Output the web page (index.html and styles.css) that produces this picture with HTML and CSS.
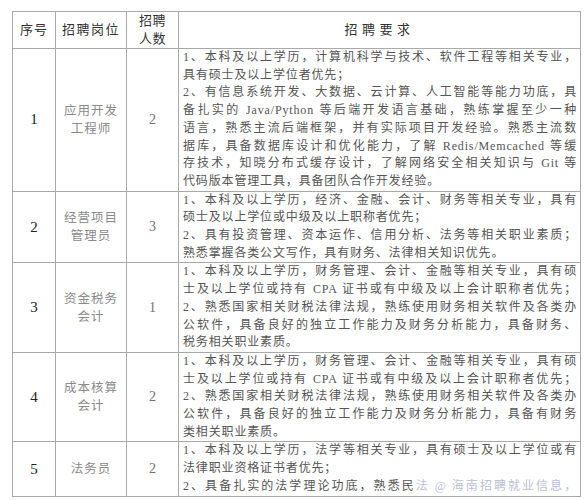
FILE: index.html
```html
<!DOCTYPE html>
<html lang="zh-CN">
<head>
<meta charset="utf-8">
<title>招聘岗位</title>
<link rel="stylesheet" href="styles.css">
</head>
<body>
<table class="jobs">
  <colgroup>
    <col class="c1"><col class="c2"><col class="c3"><col class="c4">
  </colgroup>
  <thead>
    <tr>
      <th class="h-no">序号</th>
      <th class="h-post">招聘岗位</th>
      <th class="h-cnt">招聘<br>人数</th>
      <th class="h-req">招聘要求</th>
    </tr>
  </thead>
  <tbody>
    <tr>
      <td class="no">1</td>
      <td class="post">应用开发<br>工程师</td>
      <td class="cnt">2</td>
      <td class="req">
        <span class="ln j">1、本科及以上学历，计算机科学与技术、软件工程等相关专业，</span>
        <span class="ln">具有硕士及以上学位者优先；</span>
        <span class="ln j">2、有信息系统开发、大数据、云计算、人工智能等能力功底，具</span>
        <span class="ln j">备扎实的 Java/Python 等后端开发语言基础，熟练掌握至少一种</span>
        <span class="ln j">语言，熟悉主流后端框架，并有实际项目开发经验。熟悉主流数</span>
        <span class="ln j">据库，具备数据库设计和优化能力，了解 Redis/Memcached 等缓</span>
        <span class="ln j">存技术，知晓分布式缓存设计，了解网络安全相关知识与 Git 等</span>
        <span class="ln">代码版本管理工具，具备团队合作开发经验。</span>
      </td>
    </tr>
    <tr>
      <td class="no">2</td>
      <td class="post">经营项目<br>管理员</td>
      <td class="cnt">3</td>
      <td class="req">
        <span class="ln j">1、本科及以上学历，经济、金融、会计、财务等相关专业，具有</span>
        <span class="ln">硕士及以上学位或中级及以上职称者优先；</span>
        <span class="ln j">2、具有投资管理、资本运作、信用分析、法务等相关职业素质；</span>
        <span class="ln">熟悉掌握各类公文写作，具有财务、法律相关知识优先。</span>
      </td>
    </tr>
    <tr>
      <td class="no">3</td>
      <td class="post">资金税务<br>会计</td>
      <td class="cnt">1</td>
      <td class="req">
        <span class="ln j">1、本科及以上学历，财务管理、会计、金融等相关专业，具有硕</span>
        <span class="ln j">士及以上学位或持有 CPA 证书或有中级及以上会计职称者优先；</span>
        <span class="ln j">2、熟悉国家相关财税法律法规，熟练使用财务相关软件及各类办</span>
        <span class="ln j">公软件，具备良好的独立工作能力及财务分析能力，具备财务、</span>
        <span class="ln">税务相关职业素质。</span>
      </td>
    </tr>
    <tr>
      <td class="no">4</td>
      <td class="post">成本核算<br>会计</td>
      <td class="cnt">2</td>
      <td class="req">
        <span class="ln j">1、本科及以上学历，财务管理、会计、金融等相关专业，具有硕</span>
        <span class="ln j">士及以上学位或持有 CPA 证书或有中级及以上会计职称者优先；</span>
        <span class="ln j">2、熟悉国家相关财税法律法规，熟练使用财务相关软件及各类办</span>
        <span class="ln j">公软件，具备良好的独立工作能力及财务分析能力，具备有财务</span>
        <span class="ln">类相关职业素质。</span>
      </td>
    </tr>
    <tr>
      <td class="no">5</td>
      <td class="post">法务员</td>
      <td class="cnt">2</td>
      <td class="req">
        <span class="ln j">1、本科及以上学历，法学等相关专业，具有硕士及以上学位或有</span>
        <span class="ln">法律职业资格证书者优先；</span>
        <span class="ln j">2、具备扎实的法学理论功底，熟悉民<span class="wm">法 @ 海南招聘就业信息，</span></span>
      </td>
    </tr>
  </tbody>
</table>
</body>
</html>
```

FILE: styles.css
```css
html, body {
  margin: 0;
  background: #ffffff;
}

body {
  padding: 11px 0 0 12px;
  font-family: "Liberation Serif", "Noto Sans CJK SC", serif;
  color: #555555;
}

.jobs {
  border-collapse: collapse;
  table-layout: fixed;
  width: 568px;
}

.c1 { width: 43px; }
.c2 { width: 71px; }
.c3 { width: 52px; }
.c4 { width: 402px; }

.jobs th,
.jobs td {
  border: 1px solid #a9a9a9;
  padding: 0;
  vertical-align: middle;
}

.jobs th {
  height: 36px;
  font-weight: normal;
  color: #333333;
  font-size: 13px;
  line-height: 18px;
  text-align: center;
}

.h-no { letter-spacing: 1px; }
.h-post { letter-spacing: 1.5px; }
.h-cnt { letter-spacing: 0.5px; color: #444444; }
.h-req {
  letter-spacing: 4.5px;
  font-weight: bold;
  color: #3a3a3a;
}

.no {
  text-align: center;
  font-size: 15px;
  color: #222222;
}

.post {
  text-align: center;
  color: #8a8a8a;
  font-size: 12.5px;
  letter-spacing: 1px;
  line-height: 18px;
}

.cnt {
  text-align: center;
  color: #707070;
  font-size: 14px;
}

.req {
  padding: 0 3px 0 4px !important;
  font-size: 12px;
  letter-spacing: 0.85px;
  line-height: 17.7px;
  color: #555555;
}

.ln {
  display: block;
  text-align: left;
}

.j {
  text-align: justify;
  text-align-last: justify;
}

.wm {
  color: #b9c1d1;
}
```
